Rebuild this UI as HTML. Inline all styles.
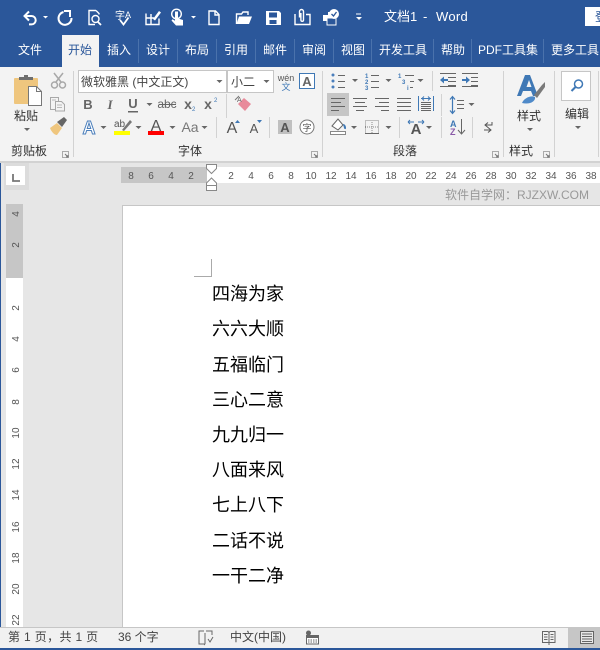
<!DOCTYPE html>
<html><head><meta charset="utf-8">
<style>
html,body{margin:0;padding:0;background:#e6e6e6}
svg{display:block}
text{font-family:"Liberation Sans","Noto Sans CJK SC",sans-serif}
.t{font-size:12px;fill:#fff;text-anchor:middle}
.r{font-size:12px;fill:#333;text-anchor:middle}
.n{font-size:10px;fill:#555;text-anchor:middle}
.d{font-size:18px;fill:#000;font-family:"Noto Sans CJK SC",sans-serif}
.w{fill:none;stroke:#fff;stroke-width:1.4}
</style></head>
<body>
<svg width="600" height="650" viewBox="0 0 600 650" xmlns="http://www.w3.org/2000/svg">
<defs><path id="v" d="M0 0h6l-3 3z"/><path id="k" d="M0 0h5l-2.500 2.500z" fill="#fff"/></defs>
<rect width="600" height="650" fill="#e6e6e6"/>
<!-- title + tabs -->
<rect width="600" height="67" fill="#2b579a"/>
<!-- QAT -->
<path class="w" style="stroke-width:2" d="M29 11.500 24.500 16 29 20.500M25 16h6.500a4.200 4.200 0 0 1 0 8.400H29"/>
<use href="#k" x="43" y="16"/>
<path class="w" style="stroke-width:2" d="M63.500 12a6.500 6.500 0 1 0 8 6"/><path class="w" style="stroke-width:2" d="M64 11h6v6"/>
<path class="w" d="M96 10.500h-7v14h6M96 10.500l3 3v1"/><circle class="w" cx="95.500" cy="19" r="3.500"/><path class="w" style="stroke-width:1.800" d="M98 22l3 3"/>
<text x="115" y="19" font-size="10" fill="#fff">字</text><text x="125" y="18" font-size="9" fill="#fff">A</text><path class="w" style="stroke-width:1.800" d="M120 20l3.500 4.500 5-7"/>
<path class="w" d="M146 13.500v11h13v-6M146 18h8M151 14v10"/><path d="M153 19l6-8 2 1.500-6 8z" fill="#fff"/>
<circle class="w" cx="176.500" cy="14" r="4.800"/><path d="M175 11.500h3v7l5 1.500v5.500h-7l-4.500-5 1-1.200 2.500 1.500z" fill="#fff"/>
<use href="#k" x="191" y="16"/>
<path class="w" d="M209 11h6.500l3.500 3.500V24.500H209zM215 11v4h4"/>
<path class="w" d="M236.500 24V14h5l1.500-2h5v3"/><path d="M236.500 24l2.500-7.500H252l-3 7.500z" fill="#fff"/>
<path d="M266 11h13l2 2v12h-15zM269 12.500v5h8v-5zM269.500 20v4h7v-4z" fill="#fff" fill-rule="evenodd"/>
<path class="w" d="M295 14v10.500h15V14.500h-4M299.500 17.500V11.500a2 2 0 0 1 4 0V20a1.300 1.300 0 0 1-2.600 0v-7"/>
<path d="M323 15h5v-3h3v4h3v8h-7v-3h-4z" fill="#fff"/><rect x="327" y="18" width="9" height="7" fill="#2b579a" stroke="#fff"/><circle cx="334" cy="14" r="5" fill="#fff"/><path d="M331.500 14l2 2 3-4" fill="none" stroke="#2b579a" stroke-width="1.300"/>
<path d="M356 13.500h5v1h-5z" fill="#fff"/><path d="M356 17h6l-3 3z" fill="#fff"/>
<text x="384" y="21" font-size="13" fill="#fff">文档1</text><text x="423" y="21" font-size="13" fill="#fff">-</text><text x="436" y="21" font-size="13" fill="#fff" letter-spacing=".3">Word</text>
<rect x="585" y="7" width="15" height="19" fill="#fff"/><text x="595" y="21" font-size="12" fill="#2b579a">登</text>
<!-- tabs -->
<rect x="62" y="35" width="37" height="33" fill="#f3f3f3"/>
<g fill="#4a72ac"><rect x="138" y="39" width="1" height="24"/><rect x="177" y="39" width="1" height="24"/><rect x="216" y="39" width="1" height="24"/><rect x="255" y="39" width="1" height="24"/><rect x="294" y="39" width="1" height="24"/><rect x="333" y="39" width="1" height="24"/><rect x="371" y="39" width="1" height="24"/><rect x="433" y="39" width="1" height="24"/><rect x="471" y="39" width="1" height="24"/><rect x="543" y="39" width="1" height="24"/></g>
<g>
<text class="t" x="30" y="54">文件</text><text class="t" x="80" y="54" style="fill:#2b579a">开始</text><text class="t" x="119" y="54">插入</text><text class="t" x="158" y="54">设计</text><text class="t" x="197" y="54">布局</text><text class="t" x="236" y="54">引用</text><text class="t" x="275" y="54">邮件</text><text class="t" x="314" y="54">审阅</text><text class="t" x="353" y="54">视图</text><text class="t" x="403" y="54">开发工具</text><text class="t" x="453" y="54">帮助</text><text class="t" x="508" y="54">PDF工具集</text><text class="t" x="575" y="54">更多工具</text>
</g>
<!-- ribbon -->
<rect y="67" width="600" height="94" fill="#f3f3f3"/>
<rect y="161" width="600" height="2" fill="#d2d2d2"/>
<g fill="#d2d2d2"><rect x="73" y="71" width="1" height="86"/><rect x="322" y="71" width="1" height="86"/><rect x="503" y="71" width="1" height="86"/><rect x="554" y="71" width="1" height="86"/><rect x="598" y="71" width="1" height="86"/>
<rect x="226" y="94" width="1" height="24"/><rect x="216" y="117" width="1" height="21"/><rect x="269" y="117" width="1" height="21"/>
<rect x="432" y="71" width="1" height="20"/><rect x="441" y="94" width="1" height="22"/><rect x="399" y="117" width="1" height="21"/><rect x="441" y="117" width="1" height="21"/><rect x="472" y="117" width="1" height="21"/></g>
<!-- clipboard -->
<rect x="14" y="78" width="24" height="26" rx="1" fill="#efc67e"/><path d="M19 80v-3h5v-2h4v2h5v3z" fill="#6e6e6e"/>
<path d="M28.500 86.500h8l5 5v14h-13z" fill="#fff" stroke="#777"/><path d="M36.500 86.500v5h5" fill="none" stroke="#777"/>
<text class="r" x="26" y="120">粘贴</text><use href="#v" x="24" y="128" fill="#666"/>
<g fill="none" stroke="#a8a8a8" stroke-width="1.500"><path d="M54 73l7 9M63 73l-7 9"/><circle cx="54.500" cy="85" r="3"/><circle cx="62.500" cy="85" r="3"/></g>
<g fill="#f3f3f3" stroke="#a8a8a8"><path d="M50.500 97.500h8v12h-8z"/><path d="M55.500 101.500h6l3 3v6.500h-9z"/><path d="M57 105h5M57 107.500h5M52 100h4" stroke-width=".8"/></g>
<path d="M50 128l7-5 5 5-5 7c-3 0-6-4-7-7z" fill="#efc67e"/><path d="M57 122l7-5 3 3-5 7z" fill="#666"/>
<text class="r" x="29" y="155">剪贴板</text>
<path d="M62.500 151.500h6v6h-6z" fill="none" stroke="#aaa"/><path d="M65 154l3 3M68 155v2h-2" fill="none" stroke="#777"/>
<path d="M311.500 151.500h6v6h-6zM492.500 151.500h6v6h-6zM543.500 151.500h6v6h-6z" fill="none" stroke="#aaa"/><path d="M314 154l3 3M317 155v2h-2M495 154l3 3M498 155v2h-2M546 154l3 3M549 155v2h-2" fill="none" stroke="#777"/>
<!-- font -->
<rect x="78.500" y="70.500" width="148" height="22" fill="#fff" stroke="#c6c6c6"/><rect x="227.500" y="70.500" width="46" height="22" fill="#fff" stroke="#c6c6c6"/>
<text x="81" y="86" font-size="12" fill="#444">微软雅黑 (中文正文)</text><text x="231" y="86" font-size="12" fill="#444">小二</text>
<use href="#v" x="216.500" y="80" fill="#666"/><use href="#v" x="263.500" y="80" fill="#666"/>
<text x="286" y="81" font-size="9" fill="#555" text-anchor="middle">wén</text><text x="286" y="90" font-size="9" fill="#3f78b5" text-anchor="middle">文</text>
<rect x="299.500" y="73.500" width="15" height="15" fill="#fff" stroke="#3f78b5"/><text x="307" y="86" font-size="13" font-weight="bold" fill="#666" text-anchor="middle">A</text>
<g font-size="13" fill="#666" font-weight="bold" text-anchor="middle">
<text x="88" y="109">B</text><text x="110" y="109" font-style="italic" style="font-family:'Liberation Serif'">I</text><text x="133" y="108">U</text>
<text x="167" y="108" font-weight="normal" font-size="12">abc</text><text x="188" y="109" font-size="14">x</text><text x="208" y="109" font-size="14">x</text>
</g>
<rect x="128" y="111" width="10" height="1.500" fill="#666"/><rect x="159" y="104" width="17" height="1" fill="#666"/>
<text x="192" y="111" font-size="6" fill="#3f78b5">2</text><text x="214" y="102" font-size="6" fill="#3f78b5">2</text>
<use href="#v" x="146.500" y="103" fill="#666"/>
<path d="M238 104l6-6 7 6-6 7z" fill="#e88a9a"/><path d="M235 100l4-4" stroke="#777" stroke-width="1"/><text x="237" y="102" font-size="7" fill="#666">A</text>
<text x="89" y="134" font-size="18" font-weight="bold" fill="#fff" stroke="#4a7ebb" stroke-width="1" text-anchor="middle">A</text>
<use href="#v" x="100.500" y="126" fill="#666"/>
<text x="114" y="127" font-size="10" fill="#555">ab</text><path d="M122 130l8-10 2 2-8 9z" fill="#777"/><rect x="114" y="131" width="16" height="4" fill="#ff0"/>
<use href="#v" x="135.500" y="126" fill="#666"/>
<text x="156" y="131" font-size="16" fill="#555" text-anchor="middle">A</text><rect x="148" y="131" width="16" height="4" fill="#f00"/>
<use href="#v" x="169.500" y="126" fill="#666"/>
<text x="190" y="132" font-size="14" fill="#777" text-anchor="middle">Aa</text><use href="#v" x="201.500" y="126" fill="#666"/>
<text x="232" y="133" font-size="16" fill="#555" text-anchor="middle">A</text><path d="M235 123l2.500-3 2.500 3z" fill="#3f78b5"/>
<text x="254" y="133" font-size="13" fill="#555" text-anchor="middle">A</text><path d="M257 120h5l-2.500 3z" fill="#3f78b5"/>
<rect x="278" y="120" width="14" height="14" fill="#c0c0c0"/><text x="285" y="132" font-size="13" font-weight="bold" fill="#555" text-anchor="middle">A</text>
<circle cx="307" cy="127" r="7" fill="#fff" stroke="#777"/><text x="307" y="131" font-size="9" fill="#555" text-anchor="middle">字</text>
<text class="r" x="190" y="155">字体</text>
<!-- paragraph row 1 -->
<g fill="#4a7ebb"><circle cx="333" cy="75" r="1.500"/><circle cx="333" cy="81" r="1.500"/><circle cx="333" cy="87" r="1.500"/></g>
<path d="M338 75.500h7M338 81.500h7M338 87.500h7M371 75.500h8M371 81.500h8M371 87.500h8M405 75.500h9M410 81.500h4M410 87.500h3" stroke="#666" fill="none"/>
<g font-size="6" font-weight="bold" fill="#3f78b5"><text x="365" y="78">1</text><text x="365" y="84">2</text><text x="365" y="90">3</text><text x="398" y="78">1</text><text x="402" y="84">3</text><text x="407" y="90">i</text></g>
<use href="#v" x="352" y="79" fill="#666"/><use href="#v" x="385.500" y="79" fill="#666"/><use href="#v" x="417.500" y="79" fill="#666"/>
<path d="M440 73.500h16M448 77.500h8M448 81.500h8M448 85.500h8M440 86.500h16M462 73.500h16M471 77.500h7M471 81.500h7M471 85.500h7M462 86.500h16" stroke="#666" fill="none"/>
<path d="M440 80l4-3.500v2.500h4v2h-4v2.500zM470 80l-4-3.500v2.500h-4v2h4v2.500z" fill="#3f78b5"/>
<!-- row 2 -->
<rect x="327" y="93" width="22" height="23" fill="#c6c6c6"/>
<path d="M331 98.500h14M331 102.500h10M331 106.500h14M331 110.500h8M353 98.500h14M355 102.500h10M353 106.500h14M356 110.500h8M375 98.500h14M379 102.500h10M375 106.500h14M381 110.500h8M397 98.500h14M397 102.500h14M397 106.500h14M397 110.500h14" stroke="#666" fill="none"/>
<path d="M418.500 96v15M433.500 96v15" stroke="#3f78b5" fill="none"/><path d="M421 98.500h10M422 98.500l2-2M422 98.500l2 2M430 98.500l-2-2M430 98.500l-2 2" stroke="#3f78b5" fill="none"/>
<path d="M421 102.500h10M421 104.500h10M421 106.500h10M421 108.500h10M421 110.500h10" stroke="#666" fill="none"/>
<path d="M452.500 97v16M450 99.500l2.500-3 2.500 3M450 110.500l2.500 3 2.500-3" stroke="#3f78b5" stroke-width="1.200" fill="none"/><path d="M457 100.500h7M457 104.500h7M457 108.500h7" stroke="#666" fill="none"/>
<use href="#v" x="468.500" y="103" fill="#666"/>
<!-- row 3 -->
<path d="M332 126l6-7 5 6-5 5z" fill="#fff" stroke="#666"/><path d="M343 124c2 0 3 2 3 4s-2 1-2 0z" fill="#3f78b5"/><rect x="330.500" y="131.500" width="15" height="3" fill="#fff" stroke="#888"/>
<use href="#v" x="351" y="126" fill="#666"/>
<rect x="365.500" y="120.500" width="13" height="13" fill="none" stroke="#888" stroke-dasharray="1 1"/><path d="M372 120v14M365 127h14" stroke="#888" stroke-dasharray="1 1"/><path d="M365 133.500h14" stroke="#666"/>
<use href="#v" x="385.500" y="126" fill="#666"/>
<text x="416" y="134" font-size="15" font-weight="bold" fill="#555" text-anchor="middle">A</text><path d="M408 122h6M408 122l2-2M408 122l2 2M424 122h-6M424 122l-2-2M424 122l-2 2" stroke="#3f78b5" fill="none"/>
<use href="#v" x="426" y="126" fill="#666"/>
<text x="450" y="127" font-size="9" font-weight="bold" fill="#3f78b5">A</text><text x="450" y="135" font-size="9" font-weight="bold" fill="#8a5aa8">Z</text><path d="M461.500 119v14M458 130l3.500 4 3.500-4" stroke="#666" fill="none"/>
<path d="M492 122v3h-7M488 122.500l-3 2.500 3 2.500M484 130h7M488 127.500l3 2.500-3 2.500" stroke="#555" fill="none"/>
<text class="r" x="405" y="155">段落</text>
<!-- styles -->
<path d="M517 96l8-21h5l8 21h-5l-2-5h-8l-2 5zM526.500 87h5l-2.500-7z" fill="#3f78b5" fill-rule="evenodd"/>
<path d="M534 95l8-10 3-3v5l-8 11z" fill="#7a7a7a"/><path d="M522 103c2-5 9-8 13-6 1 4-5 8-13 6z" fill="#4f8ac9"/>
<text class="r" x="529" y="120">样式</text><use href="#v" x="527" y="128" fill="#666"/>
<text class="r" x="521" y="155">样式</text>
<rect x="561.500" y="71.500" width="29" height="29" fill="#fff" stroke="#c6c6c6"/><circle cx="578.500" cy="84" r="4" fill="none" stroke="#3f78b5" stroke-width="1.500"/><path d="M575.500 87l-4 4" stroke="#3f78b5" stroke-width="2"/>
<text class="r" x="577" y="118">编辑</text><use href="#v" x="575" y="126" fill="#666"/>
<!-- rulers -->
<rect x="0" y="163" width="1" height="487" fill="#2b579a"/>
<rect x="4" y="163" width="25" height="27" fill="#dcdcdc"/><rect x="6" y="166" width="19" height="19" fill="#fff"/><path d="M13 174v7h7" fill="none" stroke="#777" stroke-width="1.800"/>
<rect x="121" y="167" width="86" height="16" fill="#c6c6c6"/><rect x="207" y="167" width="393" height="16" fill="#fff"/>
<g><text class="n" x="131" y="179">8</text><text class="n" x="151" y="179">6</text><text class="n" x="171" y="179">4</text><text class="n" x="191" y="179">2</text><text class="n" x="231" y="179">2</text><text class="n" x="251" y="179">4</text><text class="n" x="271" y="179">6</text><text class="n" x="291" y="179">8</text><text class="n" x="311" y="179">10</text><text class="n" x="331" y="179">12</text><text class="n" x="351" y="179">14</text><text class="n" x="371" y="179">16</text><text class="n" x="391" y="179">18</text><text class="n" x="411" y="179">20</text><text class="n" x="431" y="179">22</text><text class="n" x="451" y="179">24</text><text class="n" x="471" y="179">26</text><text class="n" x="491" y="179">28</text><text class="n" x="511" y="179">30</text><text class="n" x="531" y="179">32</text><text class="n" x="551" y="179">34</text><text class="n" x="571" y="179">36</text><text class="n" x="591" y="179">38</text></g>
<path d="M206.500 164.500h10v4l-5 5-5-5z" fill="#fff" stroke="#888"/><path d="M211.500 178l5 5v2.500h-10V183z" fill="#fff" stroke="#888"/><rect x="206.500" y="185.500" width="10" height="5" fill="#fff" stroke="#888"/>
<text x="445" y="199" font-size="12" fill="#999">软件自学网：RJZXW.COM</text>
<!-- v ruler -->
<rect x="6" y="204" width="17" height="74" fill="#c6c6c6"/><rect x="6" y="278" width="17" height="349" fill="#fff"/>
<g font-size="10" fill="#555" text-anchor="middle">
<text transform="translate(19,214) rotate(-90)">4</text><text transform="translate(19,245) rotate(-90)">2</text><text transform="translate(19,308) rotate(-90)">2</text><text transform="translate(19,339) rotate(-90)">4</text><text transform="translate(19,370) rotate(-90)">6</text><text transform="translate(19,402) rotate(-90)">8</text><text transform="translate(19,433) rotate(-90)">10</text><text transform="translate(19,464) rotate(-90)">12</text><text transform="translate(19,495) rotate(-90)">14</text><text transform="translate(19,527) rotate(-90)">16</text><text transform="translate(19,558) rotate(-90)">18</text><text transform="translate(19,589) rotate(-90)">20</text><text transform="translate(19,620) rotate(-90)">22</text></g>
<!-- page -->
<rect x="122.500" y="205.500" width="480" height="430" fill="#fff" stroke="#c6c6c6"/>
<path d="M194 276.500h17.500V259" fill="none" stroke="#aaa"/>
<g><text class="d" x="212" y="300">四海为家</text><text class="d" x="212" y="335">六六大顺</text><text class="d" x="212" y="371">五福临门</text><text class="d" x="212" y="406">三心二意</text><text class="d" x="212" y="441">九九归一</text><text class="d" x="212" y="476">八面来风</text><text class="d" x="212" y="511">七上八下</text><text class="d" x="212" y="547">二话不说</text><text class="d" x="212" y="582">一干二净</text></g>
<!-- status -->
<rect y="627" width="600" height="21" fill="#f1f1f1"/><rect y="627" width="600" height="1" fill="#c6c6c6"/><rect y="648" width="600" height="2" fill="#2b579a"/>
<text x="8" y="641" font-size="12" fill="#444" letter-spacing=".35">第 1 页，共 1 页</text><text x="118" y="641" font-size="12" fill="#444">36 个字</text>
<path d="M204 631h-5v13h5l1 1M205 633v11M206 631h6v4M208 639l2 3 3-5" fill="none" stroke="#666"/>
<text x="230" y="641" font-size="12" fill="#444">中文(中国)</text>
<circle cx="308.500" cy="633" r="2.500" fill="#666"/><path d="M306.500 635.500h12v8.500h-12z" fill="#fff" stroke="#666"/><path d="M306 636h13v2h-13z" fill="#666"/><path d="M308 640h9M308 642h9" stroke="#666" stroke-dasharray="1.500 1"/>
<path d="M542.500 631.500h5.500l1 1 1-1h5v11h-12.500z" fill="none" stroke="#666"/><path d="M549 632v13M544 634.500h3.500M544 637h3.500M544 639.500h3.500M550.500 634.500h3M550.500 637h3M550.500 639.500h3" stroke="#666" fill="none"/>
<rect x="568" y="628" width="32" height="20" fill="#c6c6c6"/><rect x="580.500" y="631.500" width="13" height="12" fill="#e8e8e8" stroke="#666"/><path d="M582 634h10M582 636.500h10M582 639h10M582 641.500h10" stroke="#666" fill="none"/>
</svg>
</body></html>
